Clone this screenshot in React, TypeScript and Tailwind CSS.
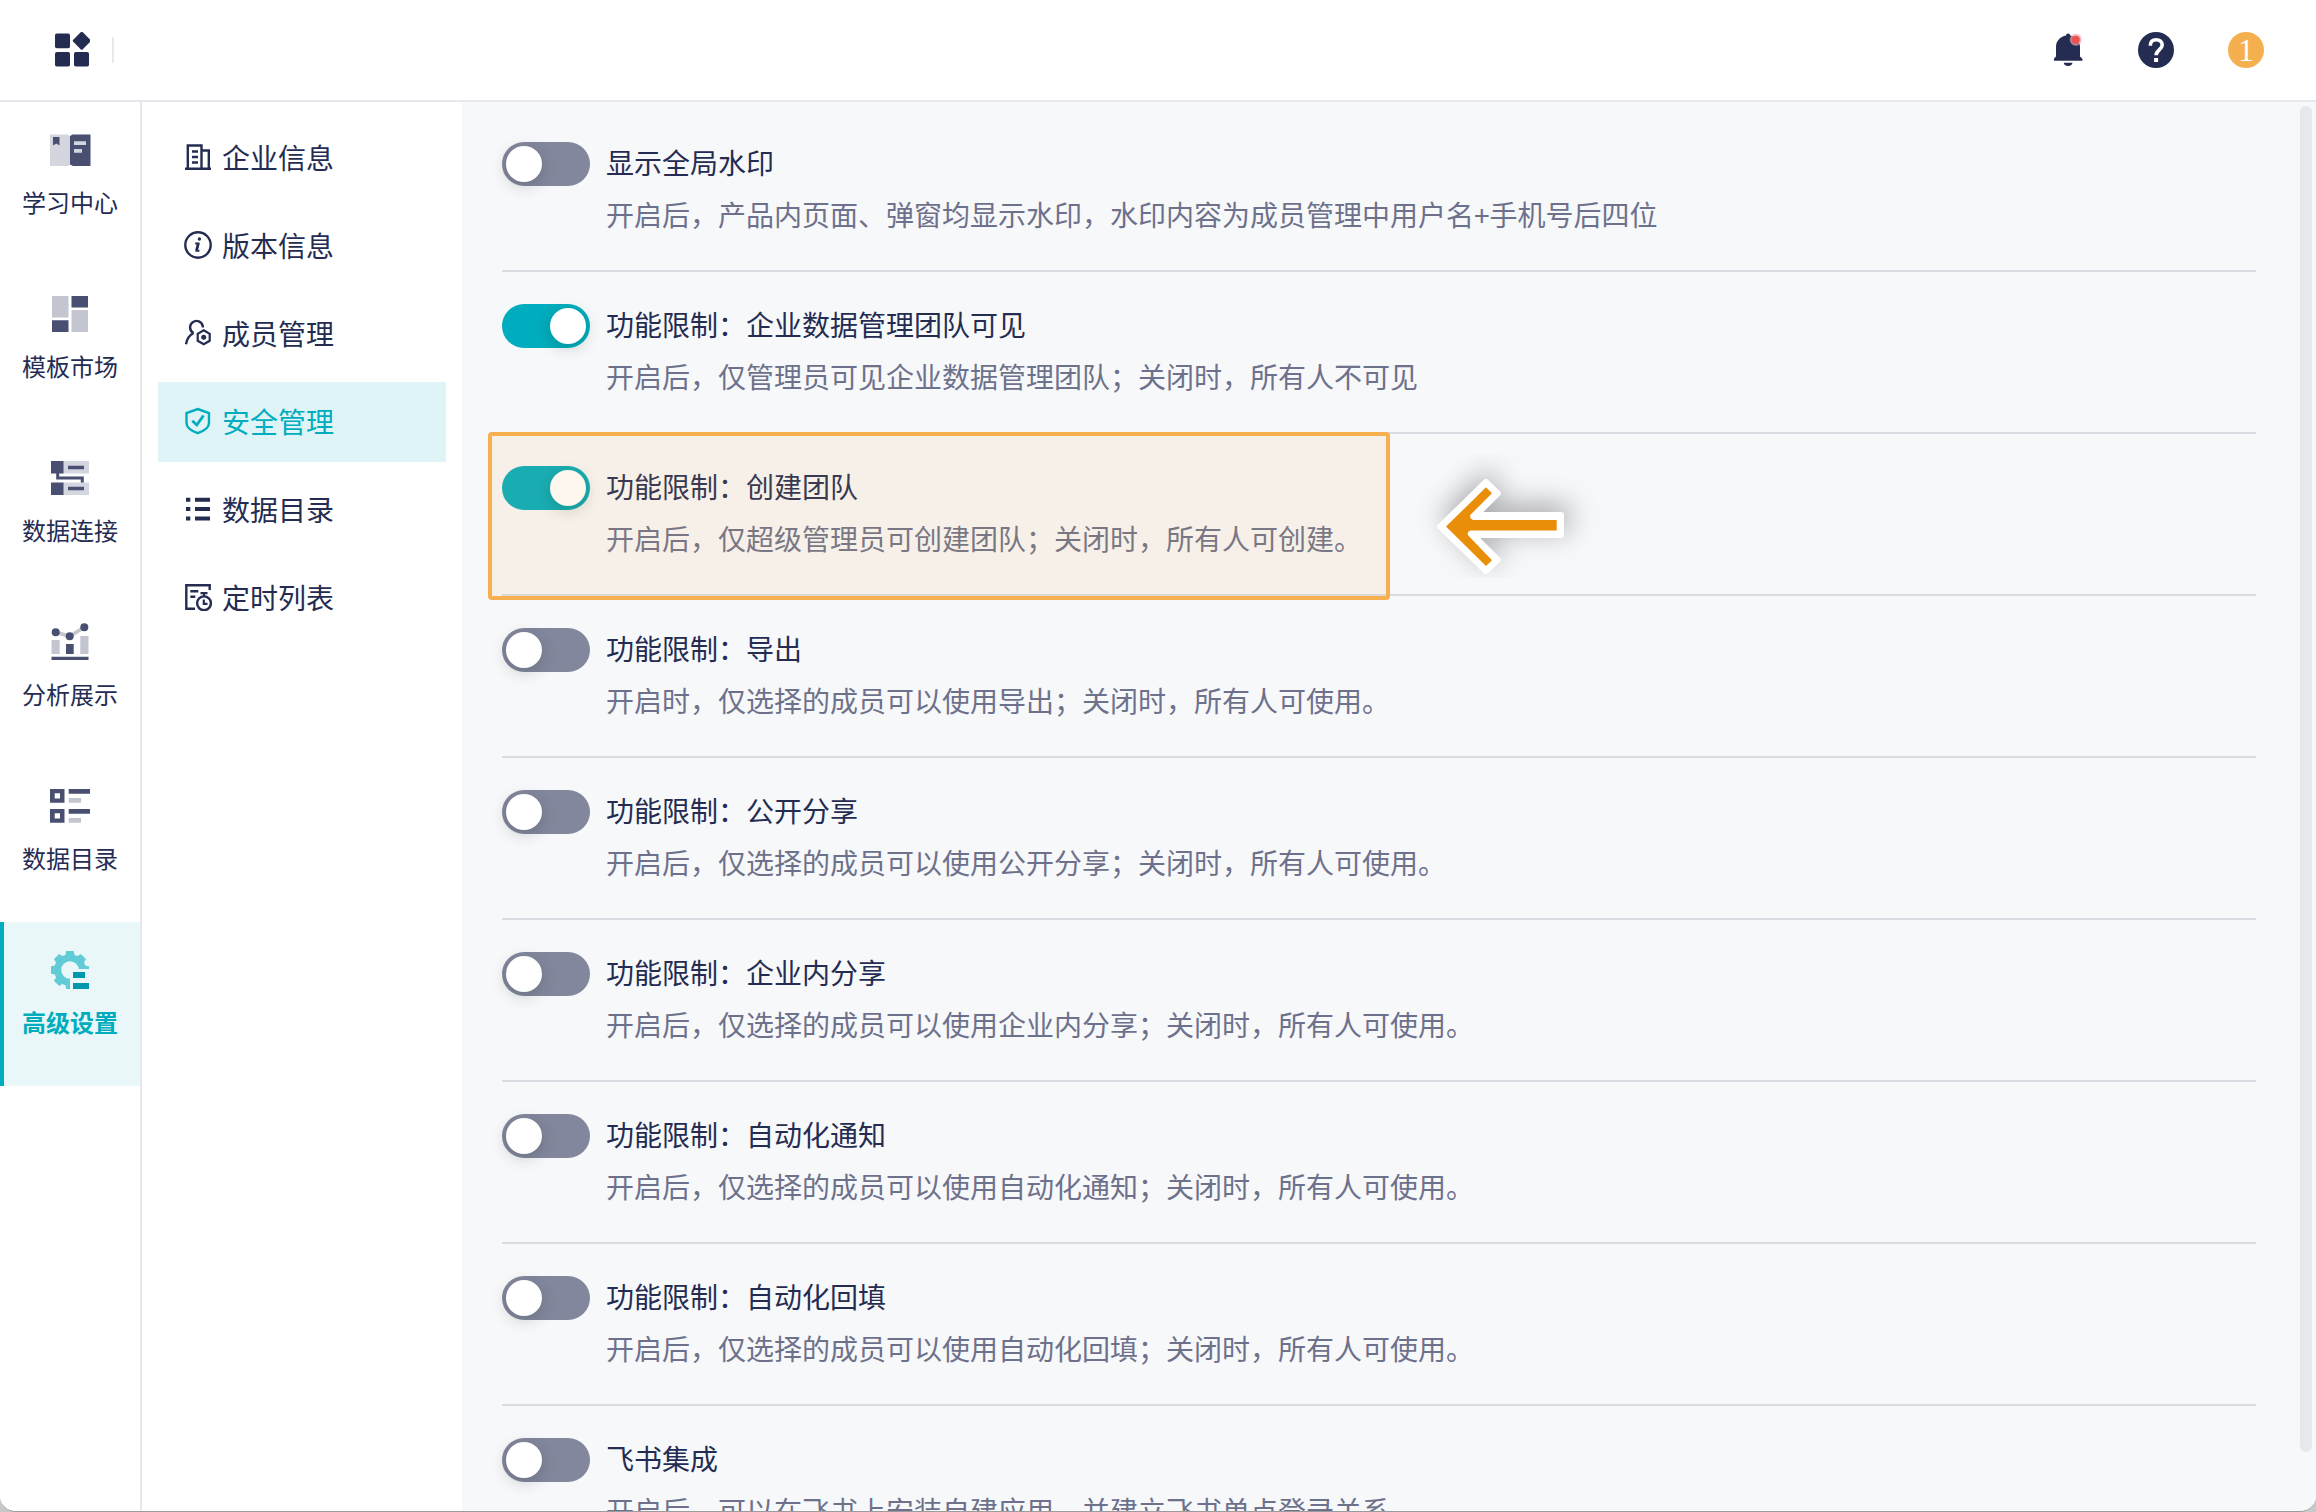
import React, { useState } from "react";

const DARK = "#494f71";
const LIGHT = "#c3c5d0";
const PALE = "#d3d5df";

/* ---------- rail icons (48 x 48) ---------- */

function RailSvg({ children }: { children: React.ReactNode }) {
  return (
    <svg viewBox="0 0 48 48" className="size-12" aria-hidden="true">
      {children}
    </svg>
  );
}

const BookIcon = () => (
  <RailSvg>
    <path d="M4 8.500h17.500L24 10v29l-2.500 1H4z" fill={PALE} />
    <path d="M24 10l2.500-1.500h18v31.500H27L24 38.500z" fill={DARK} />
    <path d="M7 11h6.500v8.500l-3.200-2-3.300 2z" fill={DARK} />
    <path d="M28 15.200h12v3.800H28zM28 23h8v3.800h-8z" fill={PALE} />
  </RailSvg>
);

const TemplateIcon = () => (
  <RailSvg>
    <path d="M6 6h16.500v21.500H6zM25.500 20H42v22H25.500z" fill={LIGHT} />
    <path d="M25.500 6H42v11.500H25.500zM6 30.300h16.500V42H6z" fill={DARK} />
  </RailSvg>
);

const ConnectIcon = () => (
  <RailSvg>
    <path d="M17 7h26v12.500H17zM17 28.500h26V41H17z" fill={PALE} />
    <path d="M5 7h12.500v12.500H5zM5 28.500h12.500V41H5zM22 11.700h16v3.600H22zM22 32.700h16v3.600H22z" fill={DARK} />
    <path d="M11.700 19v5h24.600v4.500" fill="none" stroke={DARK} strokeWidth="3" />
  </RailSvg>
);

const ChartIcon = () => (
  <RailSvg>
    <path d="M9.700 14.300l14 4 14.600-9" fill="none" stroke={LIGHT} strokeWidth="3.500" />
    <path d="M5.500 22h8.200v14H5.500zM34.300 18h8.200v18h-8.200z" fill={LIGHT} />
    <path d="M20 26h7.700v10H20zM5.500 38.700h37V42h-37z" fill={DARK} />
    <g fill={DARK}>
      <circle cx="9.700" cy="14.300" r="4" />
      <circle cx="23.700" cy="18.300" r="4" />
      <circle cx="38.300" cy="9.300" r="4" />
    </g>
  </RailSvg>
);

const DirectoryIcon = () => (
  <RailSvg>
    <path
      fillRule="evenodd"
      d="M4 7h14.500v13.700H4zM8.700 11.300h5.300v5.300H8.700zM4 27h14.500v13.700H4zM8.700 31.300h5.300v5.300H8.700zM22.700 7H44v4.700H22.700zM22.700 27H44v4.700H22.700z"
      fill={DARK}
    />
    <path d="M22.700 16H35v4.700H22.700zM22.700 36H35v4.700H22.700z" fill={LIGHT} />
  </RailSvg>
);

const GEAR_TEETH = [0, 45, 90, 135, 180, 225, 270, 315];

const GearIcon = () => (
  <RailSvg>
    <clipPath id="gear-cut">
      <path d="M0 0h48v23H24v25H0z" />
    </clipPath>
    <g clipPath="url(#gear-cut)">
      <circle cx="24" cy="24" r="12.300" fill="none" stroke="#61ccd8" strokeWidth="7" />
      {GEAR_TEETH.map((angle) => (
        <path key={angle} d="M19.200 10.500L20.200 5h7.600l1 5.500z" fill="#61ccd8" transform={`rotate(${angle} 24 24)`} />
      ))}
    </g>
    <path d="M27 26h12v6H27zM27 37h16v6H27z" fill="#0098ac" />
  </RailSvg>
);

/* ---------- settings menu icons (28 x 28) ---------- */

function MenuSvg({ children }: { children: React.ReactNode }) {
  return (
    <svg viewBox="0 0 28 28" className="size-7" fill="none" stroke="currentColor" strokeWidth="2.400" aria-hidden="true">
      {children}
    </svg>
  );
}

const CompanyIcon = () => (
  <MenuSvg>
    <path d="M3.800 26V2.500h13.700V26M17.500 7.500h7.300V26M1 25.800h26M8 8.500h6M8 14h6M8 19.500h6" />
  </MenuSvg>
);

const InfoIcon = () => (
  <MenuSvg>
    <circle cx="14" cy="14" r="12.700" />
    <circle cx="15.400" cy="8" r="1.700" fill="currentColor" stroke="none" />
    <path d="M11.200 12.600h3.300l-1.900 7.200h2.800" strokeWidth="2" />
    <path d="M14.300 12.600l-1.900 7" strokeWidth="2.600" />
  </MenuSvg>
);

const MemberIcon = () => (
  <MenuSvg>
    <path d="M9.500 14a6.400 6.400 0 1 1 9.300-6.800M9.600 14C5.500 16 3 19.500 2 25.200M18.800 7v1.500" />
    <path d="M19.700 11.300l6 3.500v7l-6 3.500-6-3.500v-7z" strokeWidth="2.200" />
    <circle cx="19.700" cy="18.300" r="2.500" fill="currentColor" stroke="none" />
  </MenuSvg>
);

const ShieldIcon = () => (
  <MenuSvg>
    <path d="M13.700 2L25 6v10c0 4.500-5 8-11.300 10.200C7.500 24 2.500 20.500 2.500 16V6z" />
    <path d="M8.300 13.800l4.500 4.200 6.700-9.500" strokeWidth="2.800" />
  </MenuSvg>
);

const ListIcon = () => (
  <MenuSvg>
    <path d="M2 4.700h4.300M2 14h4.300M2 23.500h4.300M11 4.700h15M11 14h15M11 23.500h15" strokeWidth="4" />
  </MenuSvg>
);

const TimerIcon = () => (
  <MenuSvg>
    <path d="M25.700 7V2.300H2.300v23.400H11M6.300 8.200h8M6.300 13.700h5" />
    <circle cx="20" cy="20.300" r="6.900" />
    <path d="M16.500 10.200h7M20 10v3M19.800 16.500v4.300h3.700" strokeWidth="2.200" />
  </MenuSvg>
);

/* ---------- data ---------- */

const railItems = [
  { label: "学习中心", Icon: BookIcon },
  { label: "模板市场", Icon: TemplateIcon },
  { label: "数据连接", Icon: ConnectIcon },
  { label: "分析展示", Icon: ChartIcon },
  { label: "数据目录", Icon: DirectoryIcon },
  { label: "高级设置", Icon: GearIcon, active: true },
];

const menuItems = [
  { label: "企业信息", Icon: CompanyIcon },
  { label: "版本信息", Icon: InfoIcon },
  { label: "成员管理", Icon: MemberIcon },
  { label: "安全管理", Icon: ShieldIcon, active: true },
  { label: "数据目录", Icon: ListIcon },
  { label: "定时列表", Icon: TimerIcon },
];

interface Setting {
  id: string;
  title: string;
  desc: string;
  on?: boolean;
  highlighted?: boolean;
}

const settings: Setting[] = [
  {
    id: "watermark",
    title: "显示全局水印",
    desc: "开启后，产品内页面、弹窗均显示水印，水印内容为成员管理中用户名+手机号后四位",
  },
  {
    id: "data-team",
    title: "功能限制：企业数据管理团队可见",
    desc: "开启后，仅管理员可见企业数据管理团队；关闭时，所有人不可见",
    on: true,
  },
  {
    id: "create-team",
    title: "功能限制：创建团队",
    desc: "开启后，仅超级管理员可创建团队；关闭时，所有人可创建。",
    on: true,
    highlighted: true,
  },
  { id: "export", title: "功能限制：导出", desc: "开启时，仅选择的成员可以使用导出；关闭时，所有人可使用。" },
  { id: "public-share", title: "功能限制：公开分享", desc: "开启后，仅选择的成员可以使用公开分享；关闭时，所有人可使用。" },
  { id: "inner-share", title: "功能限制：企业内分享", desc: "开启后，仅选择的成员可以使用企业内分享；关闭时，所有人可使用。" },
  { id: "auto-notify", title: "功能限制：自动化通知", desc: "开启后，仅选择的成员可以使用自动化通知；关闭时，所有人可使用。" },
  { id: "auto-fill", title: "功能限制：自动化回填", desc: "开启后，仅选择的成员可以使用自动化回填；关闭时，所有人可使用。" },
  { id: "feishu", title: "飞书集成", desc: "开启后，可以在飞书上安装自建应用，并建立飞书单点登录关系" },
];

/* ---------- layout pieces ---------- */

function Header() {
  return (
    <header className="flex h-[102px] shrink-0 items-center justify-between border-b-2 border-[#e7e8ee] bg-white pr-[52px] pl-[54px]">
      <div className="flex items-center gap-[22px]">
        <button type="button" aria-label="应用">
          <svg viewBox="0 0 36 36" className="size-9" fill="#242c52" aria-hidden="true">
            <rect x="1" y="1.500" width="15" height="14.700" rx="1.800" />
            <rect x="1" y="20" width="15" height="14.500" rx="1.800" />
            <rect x="20" y="20" width="15" height="14.500" rx="1.800" />
            <rect x="21" y="2" width="13.500" height="13.500" rx="1.500" transform="rotate(45 27.700 8.750)" />
          </svg>
        </button>
        <span className="h-[26px] w-0.5 bg-[#e9eaf0]" />
      </div>
      <div className="flex items-center gap-[54px]">
        <button type="button" aria-label="通知">
          <svg viewBox="0 0 30 36" className="h-9 w-[30px]" aria-hidden="true">
            <path
              d="M12 3.500a2.100 2.100 0 0 1 4.200 0C22 4.500 26 9 26 15v9.500l2.400 2.300v1.900H-.4v-1.900L2 24.500V15C2 9 6.200 4.500 12 3.500z"
              fill="#242c52"
            />
            <path d="M9.700 30.700h8.800a4.500 4.200 0 0 1-8.800 0z" fill="#242c52" />
            <circle cx="21.800" cy="7.800" r="6" fill="#f3a6ac" fillOpacity="0.700" />
            <circle cx="21.800" cy="7.800" r="4" fill="#ea5252" />
          </svg>
        </button>
        <button type="button" aria-label="帮助">
          <svg viewBox="0 0 36 36" className="size-9" aria-hidden="true">
            <circle cx="18" cy="18" r="18" fill="#242c52" />
            <path d="M12.300 13.800c0-4 2.400-6 5.900-6s6 2 6 5.300c0 4.600-6.100 5.200-6.100 10.200" fill="none" stroke="#fff" strokeWidth="3.600" />
            <path d="M16.100 26h4v4h-4z" fill="#fff" />
          </svg>
        </button>
        <button
          type="button"
          aria-label="账户"
          className="size-9 rounded-full bg-[#f4b04f] text-center font-['Liberation_Serif',serif] text-[32px] leading-9 text-white"
        >
          1
        </button>
      </div>
    </header>
  );
}

function Rail() {
  return (
    <nav className="w-[142px] shrink-0 border-r-2 border-[#e7e8ee] bg-white">
      {railItems.map(({ label, Icon, active }) => (
        <a
          key={label}
          href="#"
          className={`flex h-[164px] flex-col items-center gap-3 pt-6 text-2xl leading-8 ${
            active ? "bg-[#e9f7f8] font-bold text-[#00adbe] shadow-[inset_4px_0_0_#00adbe]" : "text-[#242c52]"
          }`}
        >
          <Icon />
          {label}
        </a>
      ))}
    </nav>
  );
}

function SettingsMenu() {
  return (
    <nav className="flex w-80 shrink-0 flex-col gap-2 bg-white p-4">
      {menuItems.map(({ label, Icon, active }) => (
        <a
          key={label}
          href="#"
          className={`flex h-20 items-center gap-[10px] px-[26px] pb-0.5 text-[28px] leading-10 ${
            active ? "bg-[#dff4f7] text-[#00adbe]" : "text-[#242c52]"
          }`}
        >
          <Icon />
          {label}
        </a>
      ))}
    </nav>
  );
}

function Switch({ id, defaultOn }: { id: string; defaultOn: boolean }) {
  const [on, setOn] = useState(defaultOn);
  return (
    <input
      id={id}
      type="checkbox"
      role="switch"
      checked={on}
      onChange={(e) => setOn(e.target.checked)}
      className="h-11 w-[88px] shrink-0 cursor-pointer appearance-none rounded-full bg-[#83879e] p-1 before:block before:size-9 before:rounded-full before:bg-white before:shadow-[0_4px_16px_rgba(0,35,11,0.2)] checked:bg-[#00adbe] checked:before:ml-11"
    />
  );
}

/** Orange frame around the row plus the arrow that points at it. */
function Callout() {
  return (
    <>
      <div className="pointer-events-none absolute -top-0.5 -left-[14px] z-10 h-[168px] w-[902px] rounded-sm border-4 border-[#f6b04f] bg-[#f6b04f]/10 bg-clip-padding" />
      <svg viewBox="0 0 190 124" className="pointer-events-none absolute top-5 left-[908px] h-[124px] w-[190px]" aria-hidden="true">
        <defs>
          <filter id="arrow-shadow" x="-60%" y="-60%" width="220%" height="220%">
            <feGaussianBlur stdDeviation="14" />
          </filter>
        </defs>
        <path
          d="M31 62L76 17l17 15-18 18h84v28H73l20 20-17 15z"
          fill="#000"
          fillOpacity="0.320"
          filter="url(#arrow-shadow)"
        />
        <path
          d="M30.200 72.600L76 27.900 87.800 39.400 66 61h85v20H63l24.800 24.900L76 117.200z"
          fill="#fff"
          stroke="#fff"
          strokeWidth="6"
          strokeLinejoin="round"
        />
        <path
          d="M36 72.600L76 33.300l6 6L61 60.200q-2.500 3.800 2 5.800h83.700v10.500H60.500q-4.500 1.500-2 5.300L82 106.200l-6 5.800z"
          fill="#e98e09"
        />
      </svg>
    </>
  );
}

function SettingRow({ setting }: { setting: Setting }) {
  return (
    <li className="relative flex gap-4 border-b-2 border-[#dcdde4] pt-8 pb-9">
      <Switch id={setting.id} defaultOn={!!setting.on} />
      <div className="flex flex-col gap-3 text-[28px] leading-10 whitespace-nowrap">
        <label htmlFor={setting.id} className="text-[#242c52]">
          {setting.title}
        </label>
        <p className="text-[#6d718b]">{setting.desc}</p>
      </div>
      {setting.highlighted && <Callout />}
    </li>
  );
}

export default function App() {
  return (
    <div className="h-screen bg-[#c8c8c8] font-['Noto_Sans_CJK_SC',sans-serif] font-normal">
      <div className="flex h-full flex-col overflow-hidden rounded-b-2xl border-b border-[#9c9c9c] bg-white">
        <Header />
        <div className="flex min-h-0 flex-1">
          <Rail />
          <SettingsMenu />
          <main className="relative min-w-0 flex-1 overflow-hidden bg-[#f7f8fa] pt-2 pr-[60px] pl-10">
            <ul>
              {settings.map((setting) => (
                <SettingRow key={setting.id} setting={setting} />
              ))}
            </ul>
            {/* scrollbar thumb */}
            <div className="absolute top-1 right-1 bottom-[59px] w-3 rounded-full bg-[#e7e8ec]" />
          </main>
        </div>
      </div>
    </div>
  );
}
